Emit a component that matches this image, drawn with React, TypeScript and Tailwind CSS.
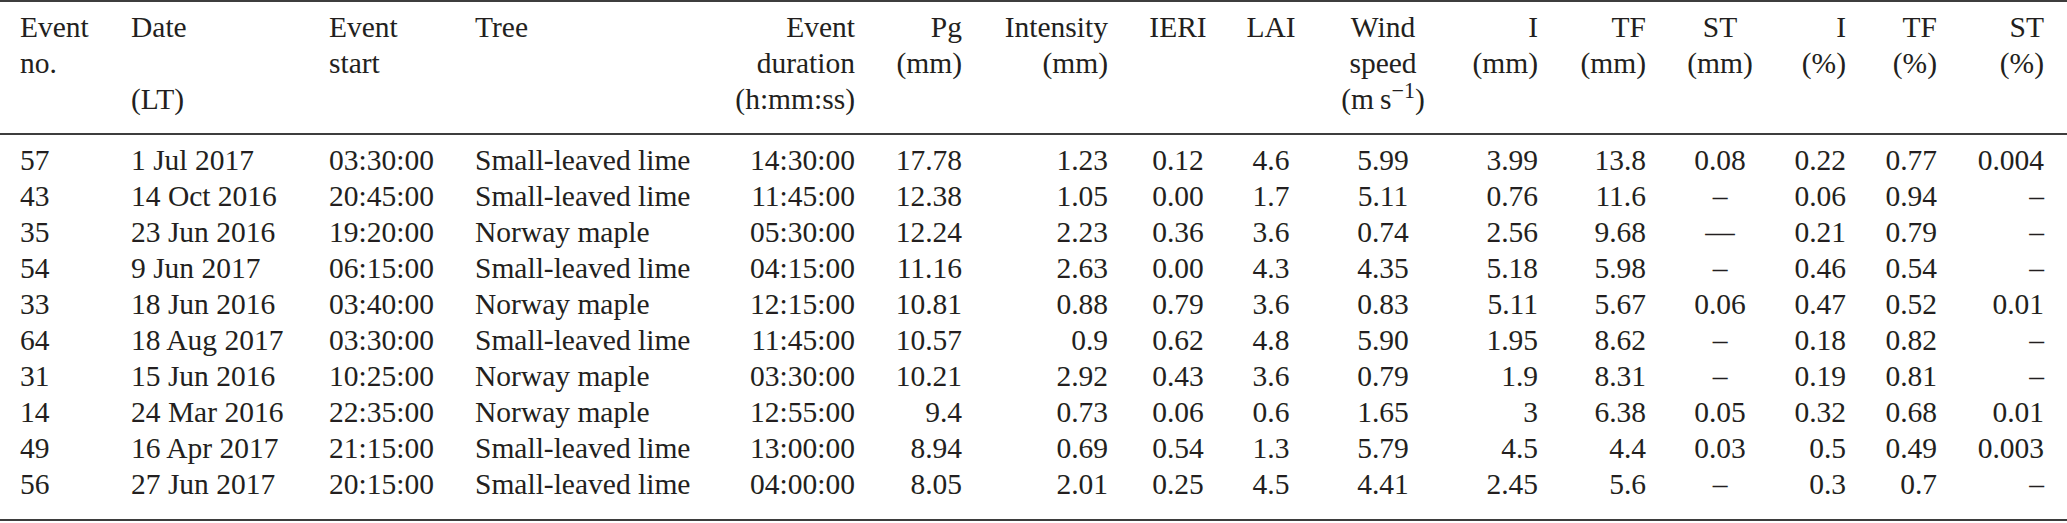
const rows: string[][] = [
  ["57", "1 Jul 2017", "03:30:00", "Small-leaved lime", "14:30:00", "17.78", "1.23", "0.12", "4.6", "5.99", "3.99", "13.8", "0.08", "0.22", "0.77", "0.004"],
  ["43", "14 Oct 2016", "20:45:00", "Small-leaved lime", "11:45:00", "12.38", "1.05", "0.00", "1.7", "5.11", "0.76", "11.6", "–", "0.06", "0.94", "–"],
  ["35", "23 Jun 2016", "19:20:00", "Norway maple", "05:30:00", "12.24", "2.23", "0.36", "3.6", "0.74", "2.56", "9.68", "—", "0.21", "0.79", "–"],
  ["54", "9 Jun 2017", "06:15:00", "Small-leaved lime", "04:15:00", "11.16", "2.63", "0.00", "4.3", "4.35", "5.18", "5.98", "–", "0.46", "0.54", "–"],
  ["33", "18 Jun 2016", "03:40:00", "Norway maple", "12:15:00", "10.81", "0.88", "0.79", "3.6", "0.83", "5.11", "5.67", "0.06", "0.47", "0.52", "0.01"],
  ["64", "18 Aug 2017", "03:30:00", "Small-leaved lime", "11:45:00", "10.57", "0.9", "0.62", "4.8", "5.90", "1.95", "8.62", "–", "0.18", "0.82", "–"],
  ["31", "15 Jun 2016", "10:25:00", "Norway maple", "03:30:00", "10.21", "2.92", "0.43", "3.6", "0.79", "1.9", "8.31", "–", "0.19", "0.81", "–"],
  ["14", "24 Mar 2016", "22:35:00", "Norway maple", "12:55:00", "9.4", "0.73", "0.06", "0.6", "1.65", "3", "6.38", "0.05", "0.32", "0.68", "0.01"],
  ["49", "16 Apr 2017", "21:15:00", "Small-leaved lime", "13:00:00", "8.94", "0.69", "0.54", "1.3", "5.79", "4.5", "4.4", "0.03", "0.5", "0.49", "0.003"],
  ["56", "27 Jun 2017", "20:15:00", "Small-leaved lime", "04:00:00", "8.05", "2.01", "0.25", "4.5", "4.41", "2.45", "5.6", "–", "0.3", "0.7", "–"],
];

// l = left, r = right, c = centre
const align = ["l", "l", "l", "l", "r", "r", "r", "c", "c", "c", "r", "r", "c", "r", "r", "r"];

const cellClass = (a: string) =>
  a === "l" ? "justify-self-start" : a === "r" ? "justify-self-end text-right" : "justify-self-center text-center";

const grid =
  "grid grid-cols-[111px_198px_146px_245px_135px_107px_146px_140px_46px_178px_66px_108px_148px_52px_91px_107px] pl-[20px] pr-[23px]";

const header: React.ReactNode[][] = [
  ["Event", "no."],
  ["Date", "\u00a0", "(LT)"],
  ["Event", "start"],
  ["Tree"],
  ["Event", "duration", "(h:mm:ss)"],
  ["Pg", "(mm)"],
  ["Intensity", "(mm)"],
  ["IERI"],
  ["LAI"],
  [
    "Wind",
    "speed",
    <span key="u">
      (m{"\u2009"}s<sup>−1</sup>)
    </span>,
  ],
  ["I", "(mm)"],
  ["TF", "(mm)"],
  ["ST", "(mm)"],
  ["I", "(%)"],
  ["TF", "(%)"],
  ["ST", "(%)"],
];

export default function App() {
  return (
    <div className="w-[2067px] h-[523px] bg-white text-[#231f20] text-[29.5px] leading-[36px] [font-family:'Liberation_Serif','Times_New_Roman',serif]">
      <div className="h-[2px] bg-[#3d3d3d]" />
      <div className={`${grid} pt-[7px] pb-[16px]`}>
        {header.map((lines, i) => (
          <div key={i} className={`whitespace-nowrap ${cellClass(align[i])}`}>
            {lines.map((l, j) => (
              <div key={j}>{l}</div>
            ))}
          </div>
        ))}
      </div>
      <div className="h-[2px] bg-[#3d3d3d]" />
      <div className="pt-[7px] pb-[17px]">
        {rows.map((r, ri) => (
          <div key={ri} className={grid}>
            {r.map((v, ci) => (
              <div key={ci} className={`whitespace-nowrap ${cellClass(align[ci])}`}>
                {v}
              </div>
            ))}
          </div>
        ))}
      </div>
      <div className="h-[2px] bg-[#3d3d3d]" />
    </div>
  );
}
